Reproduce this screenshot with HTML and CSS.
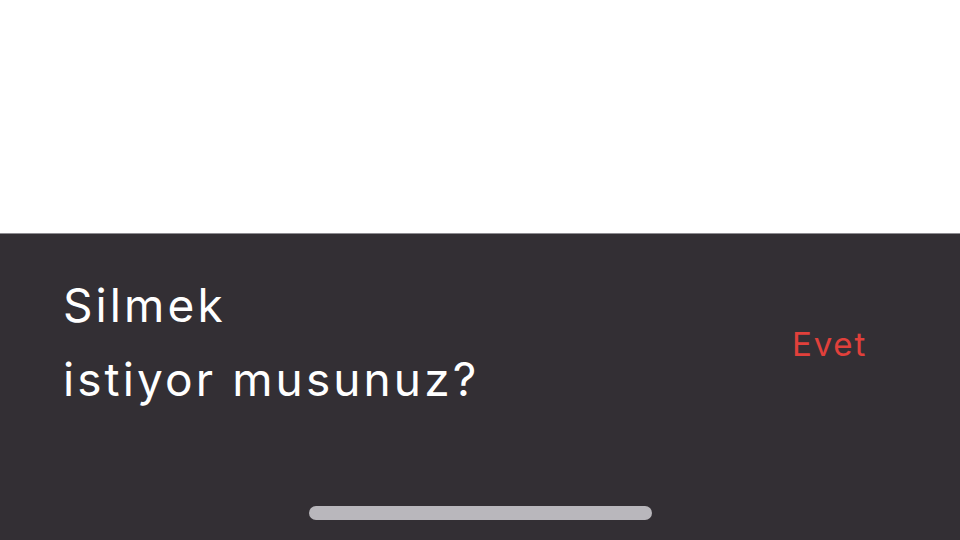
FILE: index.html
```html
<!DOCTYPE html>
<html lang="tr">
<head>
<meta charset="utf-8">
<link rel="stylesheet" href="styles.css">
</head>
<body>
<div class="top"></div>
<div class="sheet">
  <div class="row">
    <p class="msg">Silmek<br>istiyor musunuz?</p>
    <span class="action">Evet</span>
  </div>
  <div class="home"><div class="bar"></div></div>
</div>
</body>
</html>
```
FILE: styles.css
```css
html, body { margin: 0; padding: 0; }
body {
  width: 960px; height: 540px; overflow: hidden;
  display: flex; flex-direction: column;
  background: #ffffff;
  font-family: Inter, "Noto Sans", sans-serif;
}
.top { height: 233px; background: #fff; }
.sheet {
  flex: 1;
  background: #332f34;
  display: flex; flex-direction: column;
  border-top: 1px solid #8d8b90;
}
.row {
  display: flex; align-items: center; justify-content: space-between;
  padding: 0 93px 4px 63px;
  height: 216px;
}
.msg {
  margin: 0;
  color: #ffffff;
  font-size: 46px;
  line-height: 74px;
  letter-spacing: 3.1px;
}
.action {
  color: #e1403b;
  font-size: 33px;
  letter-spacing: 1.8px;
  margin-top: 4px;
}
.home { display: flex; justify-content: center; padding-top: 52px; }
.bar { width: 343px; height: 14px; border-radius: 7px; background: #b9b7bc; }
```
